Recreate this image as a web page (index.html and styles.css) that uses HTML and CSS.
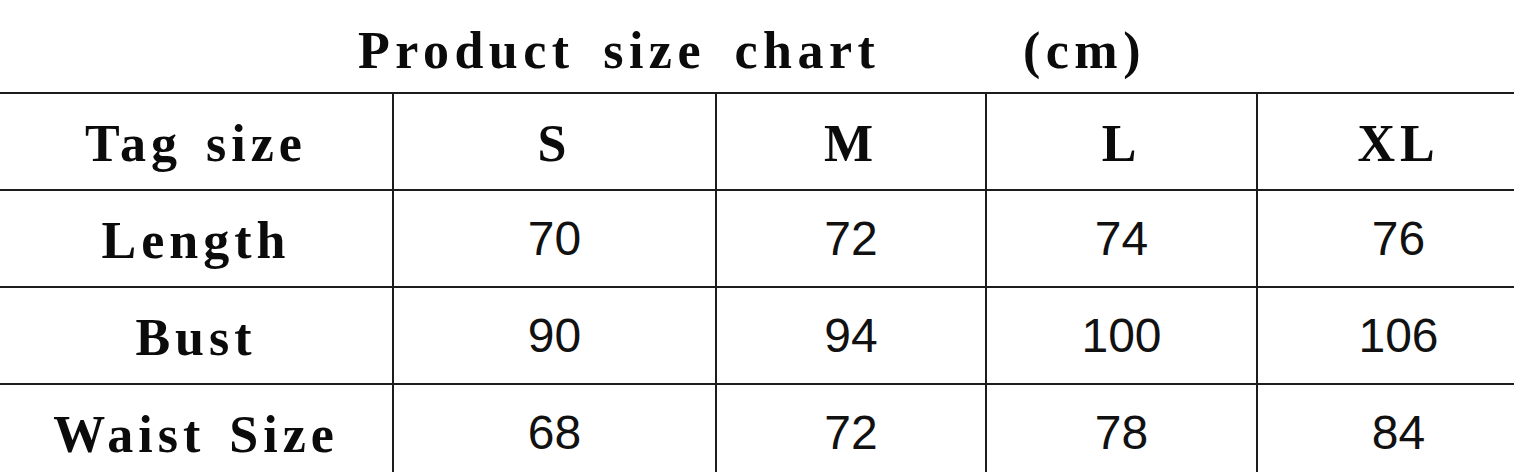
FILE: index.html
```html
<!DOCTYPE html>
<html>
<head>
<meta charset="utf-8">
<link rel="stylesheet" href="styles.css">
</head>
<body>
<div class="page">
  <h1 class="title"><span class="label">Product size chart     (cm)</span></h1>
  <table class="chart">
    <colgroup>
      <col class="c0"><col class="c1"><col class="c2"><col class="c3"><col class="c4">
    </colgroup>
    <tr class="head">
      <th><span class="label">Tag size</span></th>
      <th><span class="label">S</span></th>
      <th><span class="label">M</span></th>
      <th><span class="label">L</span></th>
      <th><span class="label">XL</span></th>
    </tr>
    <tr>
      <th><span class="label">Length</span></th>
      <td>70</td><td>72</td><td>74</td><td>76</td>
    </tr>
    <tr>
      <th><span class="label">Bust</span></th>
      <td>90</td><td>94</td><td>100</td><td>106</td>
    </tr>
    <tr>
      <th><span class="label">Waist Size</span></th>
      <td>68</td><td>72</td><td>78</td><td>84</td>
    </tr>
  </table>
</div>
</body>
</html>
```
FILE: styles.css
```css
html, body {
  margin: 0;
  padding: 0;
  background: #ffffff;
  overflow: hidden;
}

.page {
  width: 1514px;
  height: 472px;
  overflow: hidden;
}

.label {
  display: inline-block;
  font-family: "Liberation Serif", "Times New Roman", serif;
  font-weight: bold;
  font-size: 52px;
  line-height: 1;
  letter-spacing: 5px;
  word-spacing: 6px;
  white-space: pre;
  color: #0b0b0b;
}

.title {
  margin: 0;
  height: 92px;
  box-sizing: border-box;
  padding: 25px 10px 0 0;
  text-align: center;
  font-weight: normal;
}

.title .label {
  letter-spacing: 5.5px;
  word-spacing: 10px;
}

.chart {
  border-collapse: collapse;
  table-layout: fixed;
  width: 1540px;
}

.c0 { width: 393px; }
.c1 { width: 323px; }
.c2 { width: 270px; }
.c3 { width: 271px; }
.c4 { width: 283px; }

.chart th,
.chart td {
  border: 2px solid #1c1c1c;
  height: 95px;
  padding: 0;
  text-align: center;
  vertical-align: middle;
  font-weight: normal;
  line-height: 60px;
}

.chart th {
  height: 75px;
  padding-top: 20px;
}

.chart th:first-child {
  border-left: none;
}

.chart td {
  font-family: "Liberation Sans", Arial, sans-serif;
  font-size: 48px;
  color: #111111;
}
```
